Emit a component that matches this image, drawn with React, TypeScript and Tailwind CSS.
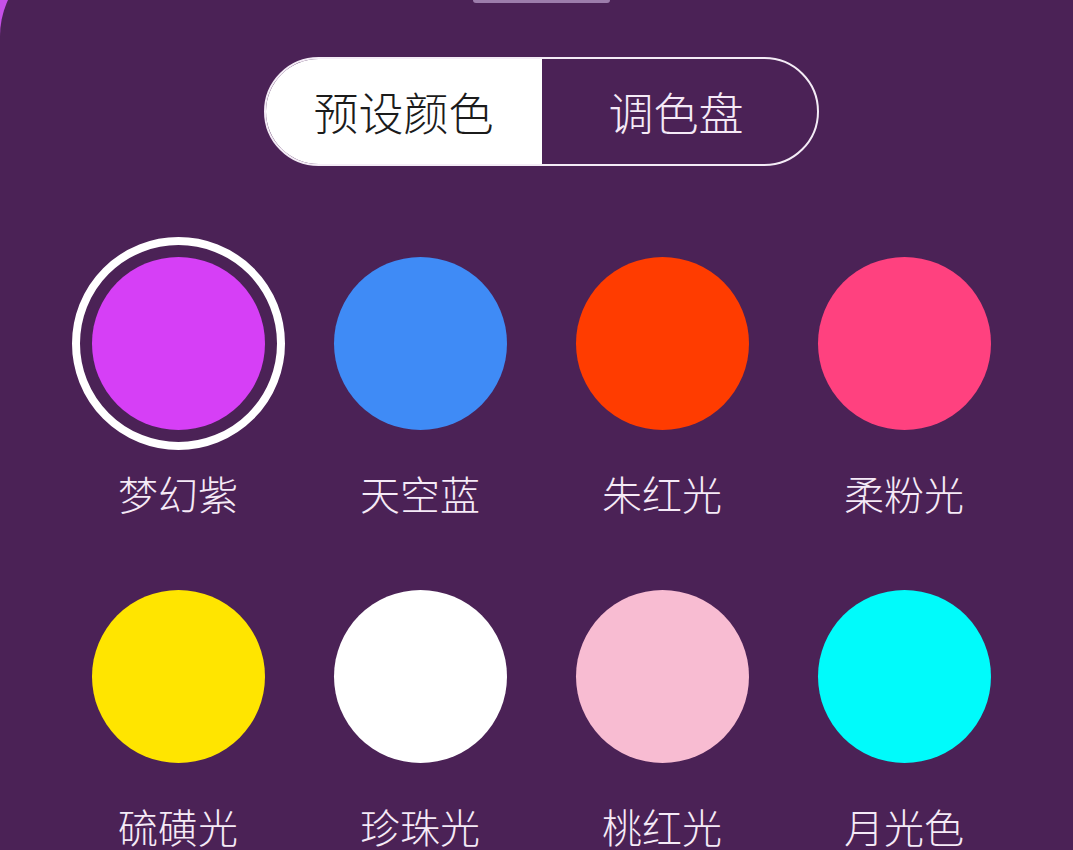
const swatches = [
  { name: '梦幻紫', color: 'bg-[#d63ff6]', selected: true },
  { name: '天空蓝', color: 'bg-[#3f8bf6]' },
  { name: '朱红光', color: 'bg-[#ff3c00]' },
  { name: '柔粉光', color: 'bg-[#ff417f]' },
  { name: '硫磺光', color: 'bg-[#ffe500]' },
  { name: '珍珠光', color: 'bg-[#ffffff]' },
  { name: '桃红光', color: 'bg-[#f8bcd2]' },
  { name: '月光色', color: 'bg-[#00fbfb]' },
];

function Swatch({ name, color, selected }: { name: string; color: string; selected?: boolean }) {
  return (
    <div className="flex flex-col items-center">
      <div
        className={`w-[213px] h-[213px] rounded-full flex items-center justify-center ${
          selected ? 'border-[8px] border-white' : ''
        }`}
      >
        <div className={`w-[173px] h-[173px] rounded-full ${color}`} />
      </div>
      <p className="mt-[19px] text-[40px] leading-[48px] font-light text-[#f5eaf7]">{name}</p>
    </div>
  );
}

export default function App() {
  return (
    <div
      className="w-[1073px] h-[850px] overflow-hidden bg-[#c650e8]"
      style={{ fontFamily: '"Noto Sans CJK SC", "Noto Sans", sans-serif' }}
    >
      <div className="w-[1082px] h-[920px] -mt-[49px] bg-[#4b2256] rounded-tl-[85px] pt-[46px] flex flex-col items-center">
        {/* drag handle */}
        <div className="w-[137px] h-[6px] rounded-full bg-[#9c7dab]" />

        {/* segmented control */}
        <div className="mt-[54px] w-[555px] h-[109px] rounded-full border-2 border-[#f4ecf6] overflow-hidden flex">
          <button type="button" className="w-[276px] h-full bg-white flex items-center justify-center">
            <span className="text-[45px] font-light text-[#1b1b1b]">预设颜色</span>
          </button>
          <button type="button" className="flex-1 h-full flex items-center justify-center">
            <span className="text-[45px] font-light text-[#f5eaf7] -ml-[6px]">调色盘</span>
          </button>
        </div>

        {/* preset colours */}
        <div className="mt-[71px] w-[968px] grid grid-cols-4 gap-y-[53px]">
          {swatches.map((s) => (
            <Swatch key={s.name} {...s} />
          ))}
        </div>
      </div>
    </div>
  );
}
